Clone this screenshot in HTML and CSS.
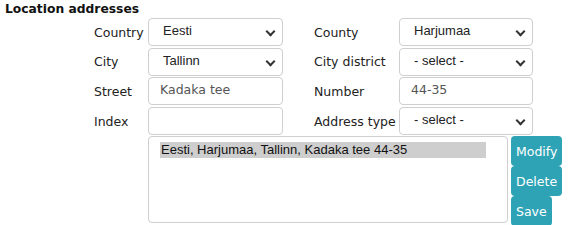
FILE: index.html
```html
<!DOCTYPE html>
<html lang="en">
<head>
    <meta charset="UTF-8">
    <title>Location addresses</title>
    <link rel="stylesheet" href="styles.css">
</head>
<body>
    <div class="section">
        <h2 class="section-title">Location addresses</h2>
        <div class="address-form">
            <label>Country</label>
            <div class="field select">Eesti</div>
            <span></span>
            <label>County</label>
            <div class="field select">Harjumaa</div>

            <label>City</label>
            <div class="field select">Tallinn</div>
            <span></span>
            <label>City district</label>
            <div class="field select">- select -</div>

            <label>Street</label>
            <div class="field input">Kadaka tee</div>
            <span></span>
            <label>Number</label>
            <div class="field input">44-35</div>

            <label>Index</label>
            <div class="field input"></div>
            <span></span>
            <label>Address type</label>
            <div class="field select">- select -</div>
        </div>
        <div class="address-list-row">
            <div class="address-list">
                <div class="address-item selected">Eesti, Harjumaa, Tallinn, Kadaka tee 44-35</div>
            </div>
            <div class="actions">
                <button class="btn">Modify</button>
                <button class="btn">Delete</button>
                <button class="btn">Save</button>
            </div>
        </div>
    </div>
</body>
</html>
```

FILE: styles.css
```css
body {
    margin: 0;
    font-family: 'DejaVu Sans', Verdana, sans-serif;
    font-size: 12.5px;
    color: #222;
    background: #fff;
    overflow: hidden;
}

.section {
    padding: 1px 0 0 5px;
}

.section-title {
    font-size: 12.3px;
    font-weight: bold;
    margin: 0;
    line-height: 16px;
    color: #111;
}

.address-form {
    display: grid;
    grid-template-columns: 54px 135px 31px 85px 134px;
    grid-auto-rows: 28px;
    row-gap: 1.7px;
    margin: 1px 0 0 89px;
    align-items: center;
}

.address-form label {
    white-space: nowrap;
    color: #222;
}

.field {
    box-sizing: border-box;
    height: 28px;
    border: 1px solid #cfcfcf;
    border-radius: 4px;
    background: #fff;
    line-height: 24px;
}

.field.select {
    position: relative;
    padding-left: 14px;
    font-family: 'Liberation Sans', Arial, sans-serif;
    font-size: 13px;
    color: #222;
}

.field.select::after {
    content: "";
    position: absolute;
    right: 8px;
    top: 9px;
    width: 5px;
    height: 5px;
    border-right: 2px solid #333;
    border-bottom: 2px solid #333;
    transform: rotate(45deg);
}

.field.input {
    padding-left: 11px;
    color: #555;
}

.address-list-row {
    display: flex;
    gap: 3px;
    margin: 1px 0 0 143px;
}

.address-list {
    box-sizing: border-box;
    width: 360px;
    height: 87px;
    border: 1px solid #cfcfcf;
    border-radius: 4px;
    padding: 5px 21px 0 11px;
    font-family: 'Liberation Sans', Arial, sans-serif;
    font-size: 13px;
}

.address-item {
    line-height: 16px;
    padding-left: 1px;
}

.address-item.selected {
    background: #cecece;
    color: #111;
}

.actions {
    display: flex;
    flex-direction: column;
    align-items: flex-start;
}

.btn {
    background: #2ea3b5;
    color: #fff;
    border: none;
    border-radius: 4px;
    font-family: 'DejaVu Sans', Verdana, sans-serif;
    font-size: 12.5px;
    height: 30px;
    padding: 0 5px;
}
```
